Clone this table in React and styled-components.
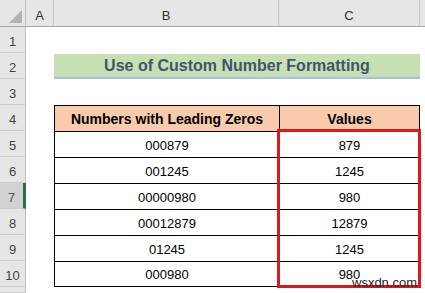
import React from "react";
import styled, { createGlobalStyle } from "styled-components";

const GlobalStyle = createGlobalStyle`
  html, body {
    margin: 0;
    padding: 0;
    background: #fff;
  }
  body {
    font-family: "Liberation Sans", Arial, sans-serif;
    overflow: hidden;
  }
`;

const Sheet = styled.div`
  position: relative;
  display: grid;
  grid-template-columns: 26px 28px 225px 141px 1fr;
  grid-template-rows: 27px repeat(10, 26px) 1fr;
  width: 425px;
  height: 293px;
  background: #fff;
  overflow: hidden;
`;

const Row = styled.div`
  grid-column: 1 / -1;
  grid-row: ${(p) => p.$r};
  display: grid;
  grid-template-columns: subgrid;
`;

const Corner = styled.div`
  display: flex;
  justify-content: flex-end;
  align-items: flex-end;
  padding: 0 3px 3px 0;
  background: #e6e6e6;
  border-right: 1px solid #bdbdbd;
  border-bottom: 1px solid #a6a6a6;
`;

const ColHead = styled.div`
  display: flex;
  justify-content: center;
  align-items: center;
  padding-top: 5px;
  background: #e6e6e6;
  border-bottom: 1px solid #a6a6a6;
  border-right: ${(p) => (p.$open ? "none" : "1px solid #c4c4c4")};
  font-size: 13px;
  color: #333;
`;

const RowHead = styled.div`
  display: flex;
  justify-content: center;
  align-items: center;
  padding-top: 4px;
  overflow: hidden;
  background: ${(p) => (p.$active ? "#d2d2d2" : "#e6e6e6")};
  border-right: ${(p) => (p.$active ? "3px solid #217346" : "1px solid #bdbdbd")};
  border-bottom: 1px solid #cdcdcd;
  font-size: 13px;
  color: ${(p) => (p.$active ? "#555" : "#444")};
`;

const Blank = styled.div`
  background: #fff;
`;

const Title = styled.div`
  grid-column: 3 / 5;
  margin-top: 1px;
  display: flex;
  justify-content: center;
  align-items: center;
  background: #c6e0b4;
  border-bottom: 2px solid #a9bfe2;
  font-size: 16px;
  font-weight: bold;
  color: #44546a;
`;

const TableCell = styled.div`
  display: flex;
  justify-content: center;
  align-items: center;
  padding-top: 1px;
  background: ${(p) => (p.$head ? "#f8cbad" : "#fff")};
  border-top: 1px solid #000;
  border-left: 1px solid #000;
  border-right: ${(p) => (p.$right ? "1px solid #000" : "none")};
  border-bottom: ${(p) => (p.$last ? "1px solid #000" : "none")};
  font-size: ${(p) => (p.$head ? "14px" : "13px")};
  font-weight: ${(p) => (p.$head ? "bold" : "normal")};
  color: #000;
`;

const RedBox = styled.div`
  grid-column: 4;
  grid-row: 6 / 12;
  margin: -2px -1px -1px -2px;
  border: 3px solid #e0161b;
  pointer-events: none;
  z-index: 1;
`;

const Watermark = styled.span`
  position: absolute;
  left: 352px;
  top: 275px;
  font-size: 13px;
  color: #222;
  z-index: 2;
`;

const rows = [
  ["000879", "879"],
  ["001245", "1245"],
  ["00000980", "980"],
  ["00012879", "12879"],
  ["01245", "1245"],
  ["000980", "980"],
];

const App = () => {
  return (
    <>
      <GlobalStyle />
      <Sheet>
        <Row $r={1}>
          <Corner>
            <svg width="13" height="13" viewBox="0 0 13 13">
              <polygon points="13,0 13,13 0,13" fill="#b4b4b4" />
            </svg>
          </Corner>
          <ColHead>A</ColHead>
          <ColHead>B</ColHead>
          <ColHead>C</ColHead>
          <ColHead $open />
        </Row>

        <Row $r={2}>
          <RowHead>1</RowHead>
        </Row>

        <Row $r={3}>
          <RowHead>2</RowHead>
          <Blank />
          <Title>Use of Custom Number Formatting</Title>
        </Row>

        <Row $r={4}>
          <RowHead>3</RowHead>
        </Row>

        <Row $r={5}>
          <RowHead>4</RowHead>
          <Blank />
          <TableCell $head>Numbers with Leading Zeros</TableCell>
          <TableCell $head $right>Values</TableCell>
        </Row>

        {rows.map(([num, val], i) => (
          <Row $r={i + 6} key={i}>
            <RowHead $active={i + 5 === 7}>{i + 5}</RowHead>
            <Blank />
            <TableCell $last={i === rows.length - 1}>{num}</TableCell>
            <TableCell $right $last={i === rows.length - 1}>{val}</TableCell>
          </Row>
        ))}

        {/* row 11 is only a sliver at the bottom edge */}
        <Row $r={12}>
          <RowHead />
        </Row>

        <RedBox />
        <Watermark>wsxdn.com</Watermark>
      </Sheet>
    </>
  );
};

export default App;
